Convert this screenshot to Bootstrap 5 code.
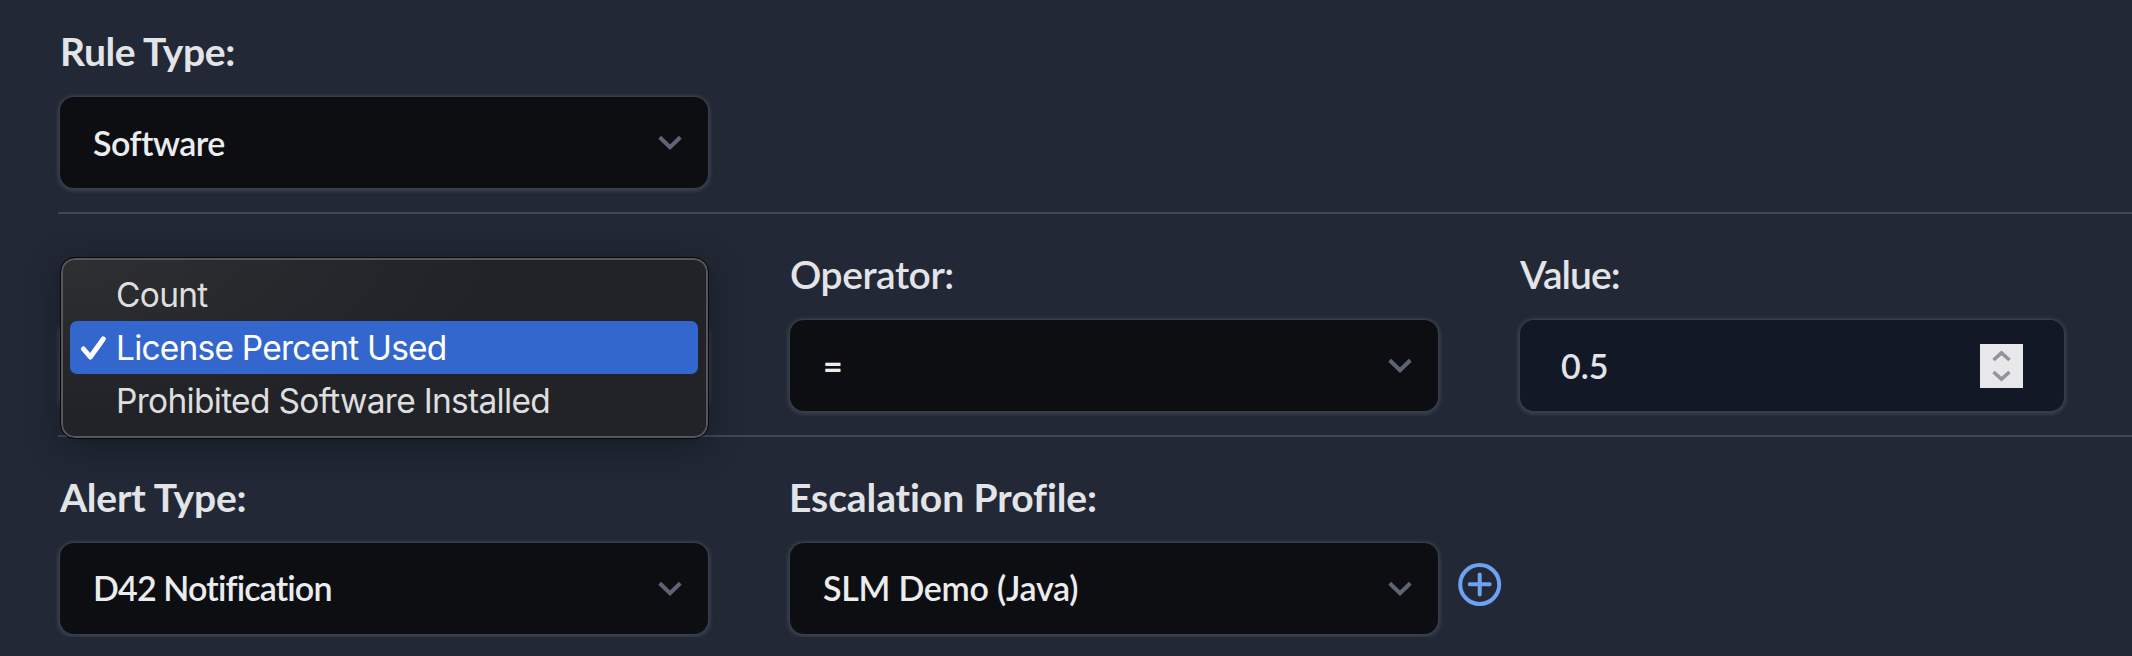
<!DOCTYPE html>
<html lang="en" data-bs-theme="dark">
<head>
<meta charset="utf-8">
<title>Alert rule</title>
<link href="https://cdn.jsdelivr.net/npm/bootstrap@5.3.0/dist/css/bootstrap.min.css" rel="stylesheet">
<style>
body { background: #222835; font-family: Lato, sans-serif; overflow: hidden; }
.rule-form { padding: 27px 0 0 58px; }
.rule-section { border-bottom: 2px solid #434855; padding: 0 0 24px 2px; gap: 82px; height: 187px; margin-bottom: 36px; }
.rule-section:last-child { border: 0; height: 164px; margin: 0; padding-bottom: 0; }
.field { width: 648px; }
.field-value { width: 544px; }
.field-label { font-size: 39px; line-height: 48px; height: 48px; margin: 0 0 22px 0; font-weight: 700; color: #e2e4e7; white-space: nowrap; letter-spacing: -.4px; }
.label-alert { letter-spacing: -.2px; }
.label-soft { font-weight: 600; letter-spacing: -.45px; }
.label-tight { letter-spacing: -.95px; }
.label-wide { letter-spacing: -.08px; margin-left: -1px; }
.control-box, .control-box:focus {
  height: 91px; border: 0; border-radius: 14px; padding: 0 70px 0 33px;
  background-color: #0d0e12; color: #ebecee; font-size: 34px; font-weight: 600; line-height: 91px;
  box-shadow: 0 0 0 1px #373d49, 0 1px 4px 2px #3e4451;
}
select.control-box {
  background-image: url("data:image/svg+xml,%3Csvg xmlns='http://www.w3.org/2000/svg' viewBox='0 0 24 16'%3E%3Cpath d='M1.7 2.2 12 12.3 22.3 2.2' fill='none' stroke='%235c6475' stroke-width='4'/%3E%3C/svg%3E");
  background-size: 24px 16px; background-position: right 26px top 38px;
}
.text-software { letter-spacing: -.5px; }
.text-operator { font-weight: 700; }
.text-notification { letter-spacing: -.85px; }
.text-profile { letter-spacing: -.25px; }
select.text-notification, select.text-profile { padding-bottom: 2px; line-height: 89px; }
div.control-box { background: #121826; padding: 0 41px 0 41px; color: #e2e4e7; }
.stepper { width: 43px; height: 44px; background: #e8e8ea; }
.add-btn { margin: 90px 0 0 -62px; width: 44px; height: 44px; }
.popup-menu {
  left: 1px; top: 8px; width: 647px; height: 180px; z-index: 5; padding: 8px 8px 8px 7px;
  border: 2px solid #55575b; border-radius: 14px; outline: 1px solid #07080b;
  background: radial-gradient(ellipse 420px 150px at 0 0, #2d2f31, transparent), #212329;
  box-shadow: 0 8px 36px rgba(5, 8, 18, .4); font-family: Inter, sans-serif;
}
.popup-item { height: 53px; line-height: 54px; font-size: 33.5px; letter-spacing: -.7px; color: #dedede; border-radius: 7px; padding-left: 46px; white-space: nowrap; }
.popup-item.selected { background: #3367ce; color: #fff; letter-spacing: -.8px; }
.popup-item svg { left: 10px; top: 14px; }
</style>
</head>
<body>
<form class="rule-form">
  <section class="rule-section d-flex">
    <div class="field">
      <label class="field-label d-block" for="ruleType">Rule Type:</label>
      <select class="form-select control-box text-software" id="ruleType"><option>Software</option></select>
    </div>
  </section>

  <section class="rule-section d-flex">
    <div class="field position-relative">
      <div class="field-label"></div>
      <div class="control-box"></div>
      <div class="popup-menu position-absolute" role="listbox">
        <div class="popup-item" role="option">Count</div>
        <div class="popup-item selected position-relative" role="option" aria-selected="true">
          <svg class="position-absolute" width="28" height="26" viewBox="0 0 28 26"><path d="M3.5 14 10.3 22 23.3 4" fill="none" stroke="#fff" stroke-width="5" stroke-linecap="round" stroke-linejoin="round"/></svg>License Percent Used</div>
        <div class="popup-item" role="option">Prohibited Software Installed</div>
      </div>
    </div>
    <div class="field">
      <label class="field-label label-soft d-block" for="operator">Operator:</label>
      <select class="form-select control-box text-operator" id="operator"><option>=</option></select>
    </div>
    <div class="field-value">
      <div class="field-label label-soft label-tight">Value:</div>
      <div class="control-box d-flex align-items-center justify-content-between">
        <span>0.5</span>
        <span class="stepper d-flex">
          <svg width="43" height="44" viewBox="0 0 43 44"><path d="M13.5 16 21.5 9 29.5 16M13.5 28 21.5 35 29.5 28" fill="none" stroke="#9292a0" stroke-width="3.6"/></svg>
        </span>
      </div>
    </div>
  </section>

  <section class="rule-section d-flex">
    <div class="field">
      <label class="field-label label-alert d-block" for="alertType">Alert Type:</label>
      <select class="form-select control-box text-notification" id="alertType"><option>D42 Notification</option></select>
    </div>
    <div class="field">
      <label class="field-label label-wide d-block" for="profile">Escalation Profile:</label>
      <select class="form-select control-box text-profile" id="profile"><option>SLM Demo (Java)</option></select>
    </div>
    <button class="add-btn btn p-0 border-0 d-flex" type="button" aria-label="Add profile">
      <svg width="44" height="44" viewBox="0 0 44 44" fill="none" stroke="#6fa1f3" stroke-width="4" stroke-linecap="round"><circle cx="21.7" cy="21.5" r="19.5"/><path d="M21.7 11.5v20M11.7 21.3h20"/></svg>
    </button>
  </section>
</form>
<script src="https://cdn.jsdelivr.net/npm/bootstrap@5.3.0/dist/js/bootstrap.bundle.min.js"></script>
</body>
</html>
